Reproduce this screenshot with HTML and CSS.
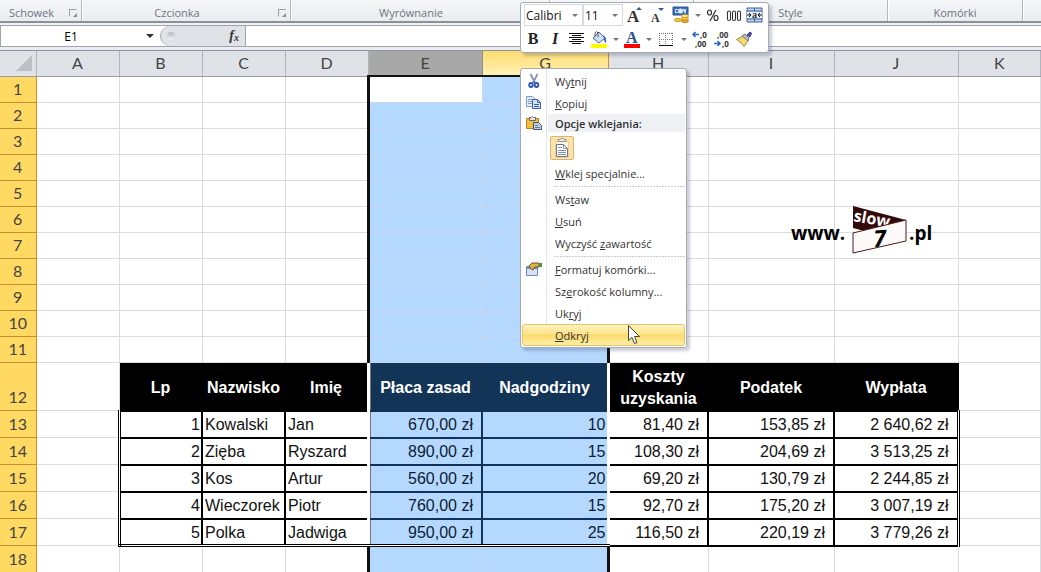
FILE: index.html
```html
<!DOCTYPE html>
<html lang="pl">
<head>
    <meta charset="UTF-8">
    <meta name="viewport" content="width=device-width, initial-scale=1.0">
    <title>Arkusz - Odkryj kolumny</title>
    <link rel="stylesheet" href="styles.css">
</head>
<body>
    <div class="app">
        <header class="ribbon">
            <div class="group clipboard"><span>Schowek</span><i class="launcher"></i></div>
            <div class="group font"><span>Czcionka</span><i class="launcher"></i></div>
            <div class="group align"><span>Wyrównanie</span><i class="launcher"></i></div>
            <div class="group number"></div>
            <div class="group style"><span>Style</span></div>
            <div class="group cells"><span>Komórki</span></div>
        </header>

        <div class="formula-bar">
            <div class="name-box">
                <input type="text" value="E1" aria-label="Pole nazwy">
                <i class="arrow dark"></i>
            </div>
            <div class="fx-area">
                <i class="knob"></i>
                <button class="fx" type="button" aria-label="Wstaw funkcję">f<sub>x</sub></button>
            </div>
            <input class="formula" type="text" aria-label="Pasek formuły">
        </div>

        <main class="sheet">
            <table>
                <colgroup>
                    <col class="w-row"><col class="w-text"><col class="w-text"><col class="w-text"><col class="w-text">
                    <col class="w-e"><col class="w-g"><col class="w-h"><col class="w-i"><col class="w-j"><col>
                </colgroup>
                <thead>
                    <tr>
                        <th class="corner"><svg width="16" height="16" viewBox="0 0 16 16"><path d="M16 0v16H0z" fill="#bcc1c6"/></svg></th>
                        <th>A</th><th>B</th><th>C</th><th>D</th><th class="active">E</th><th class="hot">G</th><th>H</th><th>I</th><th>J</th><th>K</th>
                    </tr>
                </thead>
                <tbody>
                    <tr><th>1</th><td></td><td></td><td></td><td></td><td class="e first"></td><td class="g"></td><td></td><td></td><td></td><td></td></tr>
                    <tr><th>2</th><td></td><td></td><td></td><td></td><td class="e"></td><td class="g"></td><td></td><td></td><td></td><td></td></tr>
                    <tr><th>3</th><td></td><td></td><td></td><td></td><td class="e"></td><td class="g"></td><td></td><td></td><td></td><td></td></tr>
                    <tr><th>4</th><td></td><td></td><td></td><td></td><td class="e"></td><td class="g"></td><td></td><td></td><td></td><td></td></tr>
                    <tr><th>5</th><td></td><td></td><td></td><td></td><td class="e"></td><td class="g"></td><td></td><td></td><td></td><td></td></tr>
                    <tr><th>6</th><td></td><td></td><td></td><td></td><td class="e"></td><td class="g"></td><td></td><td></td><td></td><td></td></tr>
                    <tr><th>7</th><td></td><td></td><td></td><td></td><td class="e"></td><td class="g"></td><td></td><td></td><td></td><td></td></tr>
                    <tr><th>8</th><td></td><td></td><td></td><td></td><td class="e"></td><td class="g"></td><td></td><td></td><td></td><td></td></tr>
                    <tr><th>9</th><td></td><td></td><td></td><td></td><td class="e"></td><td class="g"></td><td></td><td></td><td></td><td></td></tr>
                    <tr><th>10</th><td></td><td></td><td></td><td></td><td class="e"></td><td class="g"></td><td></td><td></td><td></td><td></td></tr>
                    <tr><th>11</th><td></td><td></td><td></td><td></td><td class="e"></td><td class="g"></td><td></td><td></td><td></td><td></td></tr>
                    <tr class="titles"><th>12</th><td></td><td class="t">Lp</td><td class="t">Nazwisko</td><td class="t">Imię</td><td class="t e">Płaca zasad</td><td class="t g">Nadgodziny</td><td class="t">Koszty uzyskania</td><td class="t">Podatek</td><td class="t">Wypłata</td><td></td></tr>
                    <tr class="data"><th>13</th><td></td><td class="d num b">1</td><td class="d">Kowalski</td><td class="d">Jan</td><td class="d e cur">670,00 zł</td><td class="d g num">10</td><td class="d cur">81,40 zł</td><td class="d cur">153,85 zł</td><td class="d cur j">2 640,62 zł</td><td></td></tr>
                    <tr class="data"><th>14</th><td></td><td class="d num b">2</td><td class="d">Zięba</td><td class="d">Ryszard</td><td class="d e cur">890,00 zł</td><td class="d g num">15</td><td class="d cur">108,30 zł</td><td class="d cur">204,69 zł</td><td class="d cur j">3 513,25 zł</td><td></td></tr>
                    <tr class="data"><th>15</th><td></td><td class="d num b">3</td><td class="d">Kos</td><td class="d">Artur</td><td class="d e cur">560,00 zł</td><td class="d g num">20</td><td class="d cur">69,20 zł</td><td class="d cur">130,79 zł</td><td class="d cur j">2 244,85 zł</td><td></td></tr>
                    <tr class="data"><th>16</th><td></td><td class="d num b">4</td><td class="d">Wieczorek</td><td class="d">Piotr</td><td class="d e cur">760,00 zł</td><td class="d g num">15</td><td class="d cur">92,70 zł</td><td class="d cur">175,20 zł</td><td class="d cur j">3 007,19 zł</td><td></td></tr>
                    <tr class="data last"><th>17</th><td></td><td class="d num b">5</td><td class="d">Polka</td><td class="d">Jadwiga</td><td class="d e cur">950,00 zł</td><td class="d g num">25</td><td class="d cur">116,50 zł</td><td class="d cur">220,19 zł</td><td class="d cur j">3 779,26 zł</td><td></td></tr>
                    <tr class="tail"><th>18</th><td></td><td></td><td></td><td></td><td class="e"></td><td class="g"></td><td></td><td></td><td></td><td></td></tr>
                </tbody>
            </table>
        </main>

        <!-- znak wodny -->
        <svg class="watermark" width="146" height="54" viewBox="0 0 146 54">
            <text class="wm-text" x="1" y="37">www.</text>
            <path d="M63 3l53 14-38 12-15-4z" fill="#330a0a"/>
            <text class="wm-slow" transform="translate(63 18) rotate(10)">slow</text>
            <path d="M63 30l53-13v21L63 50z" fill="#fffafa" stroke="#4a1a1a" stroke-width="1"/>
            <text class="wm-seven" transform="translate(84 44) rotate(-4)">7</text>
            <text class="wm-text" x="119" y="37">.pl</text>
        </svg>

        <div class="mini-toolbar">
            <div class="tools">
                <span class="drop name"><select aria-label="Czcionka"><option>Calibri</option></select><i class="arrow"></i></span>
                <span class="drop size"><select aria-label="Rozmiar"><option>11</option></select><i class="arrow"></i></span>
                <button type="button" aria-label="Zwiększ czcionkę"><svg width="20" height="18" viewBox="0 0 20 18"><text class="serif" x="1" y="16" font-size="17">A</text><path d="M10 4l3-3 3 3z" fill="#2c5aa8"/></svg></button>
                <button type="button" aria-label="Zmniejsz czcionkę"><svg width="20" height="18" viewBox="0 0 20 18"><text class="serif" x="2" y="16" font-size="12">A</text><path d="M9 2h6l-3 3z" fill="#2c5aa8"/></svg></button>
                <button class="split" type="button" aria-label="Format walutowy"><svg width="18" height="18" viewBox="0 0 18 18"><path d="M1 1h15v8H1z" fill="#3b6fc0" stroke="#2a4f94"/><path d="M3 3h3v1H4v2h2v1H3zM11 3h3v4h-2V5h-1z" fill="#c7dcf8"/><circle cx="8.500" cy="5" r="2.500" fill="#dbe9fb"/><ellipse cx="13" cy="15" rx="3.500" ry="1.800" fill="#e2a51c" stroke="#a87512" stroke-width=".6"/><ellipse cx="13" cy="12.500" rx="3.500" ry="1.800" fill="#f4c838" stroke="#a87512" stroke-width=".6"/><ellipse cx="13" cy="10" rx="3.500" ry="1.800" fill="#ffe27a" stroke="#a87512" stroke-width=".6"/><ellipse cx="6" cy="14" rx="3.500" ry="1.700" fill="#f4c838" stroke="#a87512" stroke-width=".6"/></svg><i class="arrow"></i></button>
                <button type="button" aria-label="Zapis procentowy"><svg width="18" height="18" viewBox="0 0 18 18"><g fill="none" stroke="#333" stroke-width="1.200"><ellipse cx="5.500" cy="6.500" rx="2" ry="2.500"/><ellipse cx="12" cy="12" rx="2" ry="2.500"/><path d="M12 4L6 15"/></g></svg></button>
                <button type="button" aria-label="Zapis dziesiętny"><svg width="18" height="18" viewBox="0 0 18 18"><g fill="none" stroke="#333" stroke-width="1.100"><rect x="2.500" y="5" width="3" height="9.500" rx="1.500"/><rect x="7.500" y="5" width="3" height="9.500" rx="1.500"/><rect x="12.500" y="5" width="3" height="9.500" rx="1.500"/></g></svg></button>
                <button type="button" aria-label="Scal i wyśrodkuj"><svg width="18" height="18" viewBox="0 0 18 18"><path d="M1 2h15v14H1z" fill="#c3d6f0" stroke="#3d5f94"/><path d="M1 5h15M1 13h15M8.500 2v3M8.500 13v3" stroke="#3d5f94"/><path d="M1 6h15v6H1z" fill="#e8f0fb"/><path d="M1 9h4M16 9h-4M3 7L5 9 3 11M14 7l-2 2 2 2" fill="none" stroke="#111"/><text class="serif" x="6" y="12" font-size="10">a</text></svg></button>
            </div>
            <div class="tools second">
                <button type="button"><b class="bold">B</b></button>
                <button type="button"><em class="italic">I</em></button>
                <button type="button" aria-label="Wyśrodkuj"><svg width="16" height="18" viewBox="0 0 16 18"><path d="M0 3.500h15M3 5.500h9M0 7.500h15M3 9.500h9M0 11.500h15M3 13.500h9" stroke="#111"/></svg></button>
                <button class="split" type="button" aria-label="Kolor wypełnienia"><svg width="18" height="18" viewBox="0 0 18 18"><path d="M1 14h16v4H1z" fill="#ffff00"/><path d="M3 8l6-6 6 6-6 5z" fill="#cfe0f5" stroke="#4a6a9c"/><path d="M5 7V3q1.500-3 3 0v4" fill="none" stroke="#556"/><path d="M12 5q5 1 4 8-2-1-2-5" fill="#2c5aa8"/></svg><i class="arrow"></i></button>
                <button class="split" type="button" aria-label="Kolor czcionki"><svg width="18" height="18" viewBox="0 0 18 18"><path d="M1 14h16v4H1z" fill="#ff0000"/><text class="serif blue" x="3" y="13" font-size="16">A</text></svg><i class="arrow"></i></button>
                <button class="split" type="button" aria-label="Obramowanie"><svg width="20" height="18" viewBox="0 0 20 18"><path d="M3.500 3v12M9.500 3v12M16.500 3v12M3 3.500h14M3 9.500h14" stroke="#777" stroke-dasharray="1 1"/><path d="M3 15.500h14" stroke="#111"/></svg><i class="arrow"></i></button>
                <button type="button" aria-label="Zwiększ dziesiętne"><svg width="18" height="18" viewBox="0 0 18 18"><path d="M8 4.500H2M4.500 2L2 4.500 4.500 7" fill="none" stroke="#2363c4" stroke-width="1.500"/><text class="digits" x="9" y="8">,0</text><text class="digits" x="4" y="17">,00</text></svg></button>
                <button type="button" aria-label="Zmniejsz dziesiętne"><svg width="18" height="18" viewBox="0 0 18 18"><text class="digits" x="4" y="8">,00</text><path d="M1 13.500h6M4.500 11L7 13.500 4.500 16" fill="none" stroke="#2363c4" stroke-width="1.500"/><text class="digits" x="9" y="17">,0</text></svg></button>
                <button type="button" aria-label="Malarz formatów"><svg width="18" height="18" viewBox="0 0 18 18"><path d="M1.500 9.500L8 6l5 5-4 5.500q-2-4-7.500-7z" fill="#f0dc72" stroke="#a08838"/><path d="M7 6l3-2 4 4-1 3z" fill="#b9bfc9" stroke="#777"/><path d="M12 5l3-3 1.500 1L15 7z" fill="#4a4aa4" stroke="#3c3c9c"/></svg></button>
            </div>
        </div>

        <div class="context-menu" role="menu">
            <button type="button" role="menuitem"><svg width="18" height="18" viewBox="0 0 18 18"><path d="M4.500 2l4 8M11.500 2l-4 8" stroke="#8796ab" stroke-width="1.800"/><ellipse cx="5" cy="13" rx="1.800" ry="2" fill="none" stroke="#2c55b0" stroke-width="1.800"/><ellipse cx="10.500" cy="13" rx="1.800" ry="2" fill="none" stroke="#2c55b0" stroke-width="1.800"/><path d="M7 9.500h2l1 2-2-1-2 1z" fill="#2c55b0"/></svg><span>Wy<u>t</u>nij</span></button>
            <button type="button" role="menuitem"><svg width="18" height="18" viewBox="0 0 18 18"><path d="M.5 2.500h6l3 3v7h-9z" fill="#e3edfb" stroke="#7f9bd0"/><path d="M2 5.500h4M2 7.500h5M2 9.500h5" stroke="#7d9cd4"/><path d="M6.500 5.500h5l3 3v6h-8z" fill="#d4e3f8" stroke="#3a5fae"/><path d="M11.500 5.500v3h3M8 10.500h5M8 12.500h5" fill="none" stroke="#3a5fae"/></svg><span><u>K</u>opiuj</span></button>
            <div class="heading"><svg width="18" height="18" viewBox="0 0 18 18"><path d="M.5 4.500h12v10H.5z" fill="#f5c040" stroke="#b5801f"/><path d="M3.500 6.500v-3h2q1-2 2 0h2v3z" fill="#e8e8e8" stroke="#666"/><path d="M7.500 8.500h5l3 3v4h-8z" fill="#c3d0e4" stroke="#44546c"/><path d="M9 11.500h3M9 13.500h5" stroke="#667a98"/></svg><span>Opcje wklejania:</span></div>
            <div class="paste-row"><button class="paste" type="button" aria-label="Wklej"><svg width="18" height="22" viewBox="0 0 18 22"><path d="M2.500 4.500h13v16h-13z" fill="#fff3d8" stroke="#ecd09a"/><path d="M5 4.500V2.500h2q2-3 4 0h2v2z" fill="#f4f4f4" stroke="#8a8f98"/><path d="M3.500 7.500h7l4 4v8h-11z" fill="#fff" stroke="#6d7788"/><path d="M10.500 7.500v4h4M5 10.500h4M5 13.500h8M5 15.500h8M5 17.500h8" fill="none" stroke="#7f93ad"/></svg></button></div>
            <button type="button" role="menuitem"><span><u>W</u>klej specjalnie...</span></button>
            <div class="sep"></div>
            <button type="button" role="menuitem"><span>Ws<u>t</u>aw</span></button>
            <button type="button" role="menuitem"><span><u>U</u>suń</span></button>
            <button type="button" role="menuitem"><span>Wyczyść <u>z</u>awartość</span></button>
            <div class="sep"></div>
            <button type="button" role="menuitem"><svg width="18" height="18" viewBox="0 0 18 18"><path d="M.5 6.500h11v9H.5z" fill="#d3e2f5" stroke="#7088ac"/><path d="M1 7h10v2H1z" fill="#6b94d4"/><path d="M3 6l3-3h7v4H9l-2 3-2-1z" fill="#dfb04a" stroke="#6b5220"/><path d="M13 3h3v4h-3z" fill="#4b8f3a"/></svg><span><u>F</u>ormatuj komórki...</span></button>
            <button type="button" role="menuitem"><span>Sz<u>e</u>rokość kolumny...</span></button>
            <button type="button" role="menuitem"><span>Uk<u>r</u>yj</span></button>
            <button class="selected" type="button" role="menuitem"><span><u>O</u>dkryj</span></button>
            <svg class="cursor" width="14" height="21" viewBox="0 0 14 21"><path d="M1.500 1.500v15l3.500-3 2.500 6 2.500-1-2.500-6h5z" fill="#fff" stroke="#444"/></svg>
        </div>
    </div>
</body>
</html>
```
FILE: styles.css
```css
* {
    margin: 0;
    padding: 0;
    box-sizing: border-box;
}

body {
    font-family: 'Open Sans', 'Noto Sans', sans-serif;
    background: #fff;
    color: #222;
}

button,
input,
select {
    font: inherit;
    color: inherit;
    border: none;
    background: none;
}

svg {
    overflow: visible;
}

.app {
    position: relative;
    height: 100vh;
    overflow: hidden;
}

/* wstążka */
.ribbon {
    display: flex;
    height: 23px;
    background: linear-gradient(#f4f6f8, #eaecf0);
    border-bottom: 2px solid #8c9197;
}

.group {
    display: flex;
    align-items: center;
    justify-content: center;
    position: relative;
    height: 21px;
    padding-top: 5px;
    border-right: 1px solid #b4b8be;
    box-shadow: 1px 0 #fff;
    font-size: 11px;
    line-height: 16px;
    color: #6c7482;
    flex: none;
}

.group span {
    flex: 1;
    text-align: center;
}

.clipboard {
    width: 82px;
}

.font {
    width: 209px;
}

.clipboard,
.font,
.align {
    gap: 6px;
    padding-right: 4px;
}

.align {
    width: 259px;
}

.number {
    width: 144px;
}

.style {
    width: 194px;
}

.cells {
    width: 135px;
}

.launcher {
    width: 8px;
    height: 8px;
    border: 1px solid #9aa0a9;
    border-right-color: transparent;
    border-bottom-color: transparent;
    position: relative;
}

.launcher::after {
    content: "";
    position: absolute;
    right: -1px;
    bottom: -1px;
    border: 2px solid #8a909a;
    border-top-color: transparent;
    border-left-color: transparent;
}

/* pasek formuły */
.formula-bar {
    display: flex;
    height: 28px;
    padding: 2px 0 4px;
    background: linear-gradient(#eef0f3 2px, #a0a5ab 2px, #a0a5ab 3px, #dfe3e8 3px, #dfe3e8 23px, #a0a5ab 23px, #a0a5ab 24px, #ececf6 24px);
    border-bottom: 1px solid #8f9298;
}

.formula-bar > * {
    margin-top: 1px;
    height: 20px;
}

.name-box {
    display: flex;
    align-items: center;
    width: 166px;
    background: #fff;
    border-left: 1px solid #a0a5ab;
}

.name-box input {
    width: 140px;
    text-align: center;
    font-size: 12px;
    color: #000;
}

.arrow {
    border: 3px solid transparent;
    border-top-color: #777;
    border-bottom: none;
}

.arrow.dark {
    border-width: 4px;
    border-bottom: none;
    border-top-color: #333;
    margin-left: 5px;
}

.fx-area {
    display: flex;
    align-items: center;
    justify-content: space-between;
    width: 86px;
    margin-left: -6px;
    padding: 0 6px;
    background: #dfe3e8;
    border-left: 1px solid #a0a5ab;
    border-right: 1px solid #a0a5ab;
    border-radius: 10px 0 0 10px;
}

.knob {
    width: 8px;
    height: 8px;
    border-radius: 50%;
    background: linear-gradient(#b4b9be, #f0f2f4);
}

.fx {
    font: italic bold 14px 'Liberation Serif', serif;
    color: #333;
}

.fx sub {
    font-size: 10px;
    vertical-align: -1px;
}

.formula {
    flex: 1;
    background: #fff;
    padding: 0 6px;
    font-size: 12px;
}

/* arkusz */
table {
    width: 100%;
    table-layout: fixed;
    border-collapse: collapse;
}

.w-row {
    width: 36px;
}

.w-text {
    width: 83px;
}

.w-e {
    width: 114px;
}

.w-g {
    width: 126px;
}

.w-h {
    width: 100px;
}

.w-i {
    width: 126px;
}

.w-j {
    width: 124px;
}

tr {
    height: 26px;
}

thead tr {
    height: 25px;
}

th {
    font-family: Lato, sans-serif;
    font-size: 16px;
    line-height: 20px;
    font-weight: normal;
    color: #444;
}

thead th {
    background: #dfe3e8;
    border-right: 1px solid #b0b5bb;
    border-bottom: 1px solid #9a9ea4;
}

thead .corner {
    text-align: right;
    padding-right: 4px;
}

.corner svg {
    display: block;
    margin-left: auto;
}

thead .active {
    background: #a8a8a8;
    border-right-color: #8c8c8c;
}

thead .hot {
    background: linear-gradient(#ffdc70, #fff0b4);
    border-right-color: #c98f2e;
}

tbody th {
    background: #ffd961;
    border-right: 1px solid #c98f2e;
    border-bottom: 1px solid #c98f2e;
}

td {
    font-family: 'Liberation Sans', Arial, sans-serif;
    font-size: 16px;
    line-height: 20px;
    border-right: 1px solid #dadcdd;
    border-bottom: 1px solid #dadcdd;
    white-space: nowrap;
    overflow: hidden;
    color: #111;
}

.e,
.g {
    background: #b5d9fe;
    border-color: #c4d8ee;
}

.e {
    border-left: 3px solid #111;
}

.g {
    border-right: 3px solid #111;
}

.e.first {
    background: #fff;
}

.e.first,
.first + .g {
    border-top: 2px solid #111;
}

.titles {
    height: 48px;
}

.titles th {
    vertical-align: bottom;
    padding-bottom: 3px;
}

.t {
    background: #000;
    border: 1px solid #000;
    color: #fff;
    font-weight: bold;
    line-height: 22px;
    padding-top: 3px;
    text-align: center;
    white-space: normal;
}

.t.e,
.t.g {
    background: #123457;
    border-color: #123457;
}

.data,
.tail {
    height: 27px;
}

.d {
    border: 2px solid #000;
    padding: 2px 2px 0;
}

.d.num {
    text-align: right;
    padding-right: 1px;
}

.d.cur {
    text-align: right;
    padding-right: 8px;
}

.d.b {
    border-left: 3px double #000;
}

.d.j {
    border-right: 3px double #000;
}

.last .d.b,
.last .d.b + .d,
.last .d.b + .d + .d,
.last .d.e,
.last .d.g {
    border-bottom: 3px double #000;
}

.d.e,
.d.g {
    border-color: #10325a;
    color: #0c1c34;
}

.t.e,
.d.e {
    border-left: 3px solid #fff;
    box-shadow: inset 1px 0 #777;
}

.t.g,
.d.g {
    border-right: 3px solid #fff;
}

/* znak wodny */
.watermark {
    position: absolute;
    left: 790px;
    top: 203px;
}

.wm-text {
    font: bold 19px 'Open Sans', sans-serif;
}

.wm-slow {
    font: bold 16px 'Open Sans', sans-serif;
    fill: #fff;
}

.wm-seven {
    font: italic bold 23px 'Open Sans', sans-serif;
}

/* minipasek narzędzi */
.mini-toolbar {
    position: absolute;
    left: 520px;
    top: 2px;
    width: 249px;
    height: 51px;
    padding: 1px 3px;
    background: #fff;
    border: 1px solid #a7abb0;
    border-radius: 3px;
    box-shadow: 3px 3px 3px rgba(60, 60, 100, 0.25);
}

.tools {
    display: flex;
    align-items: center;
    gap: 3px;
    height: 22px;
}

.tools.second {
    gap: 4px;
    height: 26px;
}

.drop {
    display: flex;
    align-items: center;
    height: 22px;
    padding-right: 4px;
    border: 1px solid #d6d9dd;
}

.drop select {
    appearance: none;
    flex: 1;
    width: 0;
    padding-left: 1px;
    font-size: 12px;
    color: #111;
}

.drop.name {
    width: 59px;
}

.drop.size {
    width: 40px;
    margin-left: -3px;
}

.tools button {
    display: flex;
    align-items: center;
    justify-content: center;
    min-width: 18px;
    height: 20px;
}

.tools .split {
    gap: 5px;
}

.serif {
    font-family: 'Liberation Serif', serif;
    font-weight: bold;
    fill: #333;
}

.blue {
    fill: #2c4f8c;
}

.digits {
    font: bold 8px 'Open Sans', sans-serif;
    fill: #333;
}

.bold {
    font: bold 16px 'Liberation Serif', serif;
}

.italic {
    font: italic bold 16px 'Liberation Serif', serif;
}

/* menu podręczne */
.context-menu {
    position: absolute;
    left: 520px;
    top: 68px;
    width: 167px;
    padding: 1px;
    background: linear-gradient(90deg, #fff 25px, #e2e4e7 25px, #e2e4e7 26px, #fff 26px);
    border: 1px solid #a7abb0;
    border-radius: 3px;
    box-shadow: 3px 3px 3px rgba(60, 60, 100, 0.25);
    font-size: 11px;
    line-height: 16px;
    color: #333;
}

.context-menu > button,
.heading {
    display: grid;
    grid-template-columns: 18px 1fr;
    gap: 11px;
    align-items: center;
    width: 100%;
    height: 22px;
    padding-left: 4px;
    text-align: left;
}

.context-menu span {
    grid-column: 2;
    padding-top: 1px;
}

.context-menu svg {
    grid-row: 1;
}

.context-menu .heading {
    height: 18px;
    font-weight: 600;
    background: linear-gradient(90deg, transparent 26px, #eff1f5 26px);
}

.paste-row {
    height: 30px;
    padding: 4px 0 0 28px;
}

.paste {
    display: flex;
    align-items: center;
    justify-content: center;
    width: 24px;
    height: 24px;
    background: #fde3ab;
    border: 1px solid #d9b574;
    border-radius: 2px;
}

.sep {
    height: 4px;
    margin-left: 32px;
    background: repeating-linear-gradient(90deg, #c9ccd0 0, #c9ccd0 2px, transparent 2px, transparent 3px) 0 2px / 100% 1px no-repeat;
}

.context-menu .selected {
    background: linear-gradient(#fff3c0, #fde288 45%, #fbd96c 50%, #fff0a8);
    border: 1px solid #e5c365;
    border-radius: 3px;
    padding-left: 3px;
}

.context-menu .cursor {
    position: absolute;
    left: 106px;
    top: 255px;
}
```
